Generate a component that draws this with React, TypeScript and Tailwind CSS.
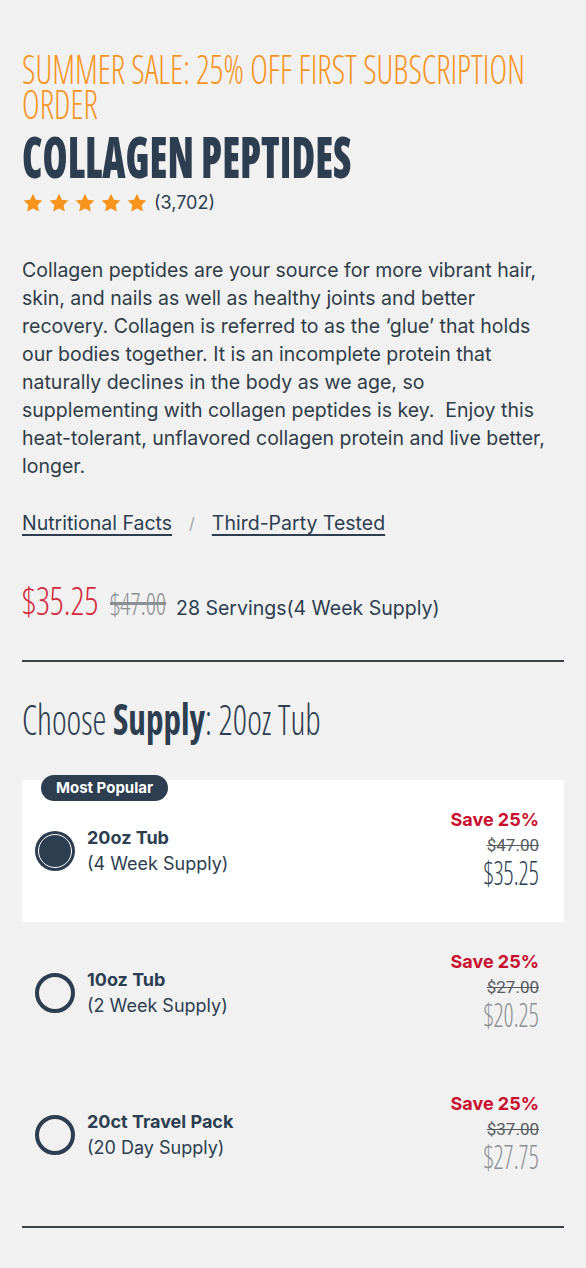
import React, { useState } from 'react';

const OPTIONS = [
  { id: '20oz', title: '20oz Tub', sub: '(4 Week Supply)', was: '$47.00', now: '$35.25', popular: true },
  { id: '10oz', title: '10oz Tub', sub: '(2 Week Supply)', was: '$27.00', now: '$20.25', popular: false },
  { id: 'travel', title: '20ct Travel Pack', sub: '(20 Day Supply)', was: '$37.00', now: '$27.75', popular: false },
];

function Star() {
  return (
    <svg viewBox="0 0 24 24" className="w-[22px] h-[22px] fill-[#f7941d]">
      <path d="M12 1.8l3.1 6.6 7.2.9-5.3 5 1.4 7.1L12 17.9l-6.4 3.5 1.4-7.1-5.3-5 7.2-.9z" />
    </svg>
  );
}

function Radio({ checked }: { checked: boolean }) {
  if (checked) {
    return (
      <div className="w-[40px] h-[40px] shrink-0 rounded-full bg-[#2c3e50] p-[3px]">
        <div className="w-full h-full rounded-full border-[1.5px] border-white bg-[#2c3e50]" />
      </div>
    );
  }
  return <div className="w-[40px] h-[40px] shrink-0 rounded-full border-[4px] border-[#2c3e50]" />;
}

export default function App() {
  const [selected, setSelected] = useState('20oz');

  return (
    <div className="min-h-[1268px] bg-[#f1f1f1] px-[22px] pt-[51px] pb-10 font-['Inter',sans-serif] text-[#2c3e50]">
      <h3 className="font-['Open_Sans',sans-serif] [font-stretch:75%] font-light text-[40px] leading-[35px] text-[#f7941d] whitespace-nowrap scale-x-[0.84] origin-left">
        SUMMER SALE: 25% OFF FIRST SUBSCRIPTION
        <br />
        ORDER
      </h3>
      <h1 className="mt-[10px] font-['Open_Sans',sans-serif] [font-stretch:75%] font-extrabold text-[57px] leading-[50px] whitespace-nowrap scale-x-[0.71] origin-left">
        COLLAGEN PEPTIDES
      </h1>
      <div className="mt-[10px] flex items-center leading-[24px]">
        <div className="flex gap-[4px]">
          <Star />
          <Star />
          <Star />
          <Star />
          <Star />
        </div>
        <span className="text-[18px] ml-[6px]">(3,702)</span>
      </div>

      <p className="mt-[41px] text-[19.5px] leading-[28px] text-[#2f3d48]">
        Collagen peptides are your source for more vibrant hair, skin, and nails as well as healthy joints and better
        recovery. Collagen is referred to as the ‘glue’ that holds our bodies together. It is an incomplete protein that
        naturally declines in the body as we age, so supplementing with collagen peptides is key.&nbsp; Enjoy this
        heat-tolerant, unflavored collagen protein and live better, longer.
      </p>

      <div className="mt-[29px] flex items-center gap-[17px] text-[19.5px] leading-[28px]">
        <a className="underline underline-offset-[4px] decoration-[1.5px]">Nutritional Facts</a>
        <span className="text-[#a0a5aa] text-[16px]">/</span>
        <a className="underline underline-offset-[4px] decoration-[1.5px]">Third-Party Tested</a>
      </div>

      <div className="mt-[41px] flex items-baseline leading-[44px]">
        <span className="w-[76px] whitespace-nowrap font-['Open_Sans',sans-serif] [font-stretch:75%] font-light text-[38px] text-[#d22a3a]">
          <span className="inline-block scale-x-[0.9] origin-left">$35.25</span>
        </span>
        <span className="ml-[12px] w-[56px] whitespace-nowrap font-['Open_Sans',sans-serif] [font-stretch:75%] font-light text-[31px] text-[#8a8f94]">
          <span className="inline-block scale-x-[0.81] origin-left line-through">$47.00</span>
        </span>
        <span className="ml-[10px] text-[19.5px]">28 Servings(4 Week Supply)</span>
      </div>

      <hr className="mt-[30px] border-t-[2px] border-[#3c4247]" />

      <h2 className="mt-[34px] font-['Open_Sans',sans-serif] [font-stretch:75%] font-light text-[42px] leading-[46px] whitespace-nowrap scale-x-[0.835] origin-left">
        Choose <span className="font-bold">Supply</span>: 20oz Tub
      </h2>

      <div className="mt-[38px] flex flex-col">
        {OPTIONS.map((o) => {
          const checked = selected === o.id;
          return (
            <button
              key={o.id}
              onClick={() => setSelected(o.id)}
              className={
                'relative h-[142px] flex items-center pl-[13px] pr-[25px] text-left ' + (checked ? 'bg-white' : 'bg-transparent')
              }
            >
              {o.popular && (
                <span className="absolute -top-[5px] left-[19px] h-[26px] px-[15px] flex items-center rounded-full bg-[#2c3e50] text-white text-[15px] font-bold">
                  Most Popular
                </span>
              )}
              <Radio checked={checked} />
              <div className="ml-[12px] flex flex-col">
                <span className="text-[18px] leading-[26px] font-bold">{o.title}</span>
                <span className="text-[18px] leading-[26px]">{o.sub}</span>
              </div>
              <div className="ml-auto flex flex-col items-end -mt-[7px]">
                <span className="text-[18px] leading-[26px] font-bold text-[#c8102e]">Save 25%</span>
                <span className="font-['Roboto',sans-serif] text-[17px] leading-[24px] text-[#555b60] line-through">{o.was}</span>
                <span
                  className={
                    "inline-block origin-right scale-x-[0.75] font-['Open_Sans',sans-serif] [font-stretch:75%] font-light text-[33px] leading-[32px] " +
                    (checked ? 'text-[#2c3e50]' : 'text-[#8a8f94]')
                  }
                >
                  {o.now}
                </span>
              </div>
            </button>
          );
        })}
      </div>

      <hr className="mt-[20px] border-t-[2px] border-[#3c4247]" />
    </div>
  );
}
